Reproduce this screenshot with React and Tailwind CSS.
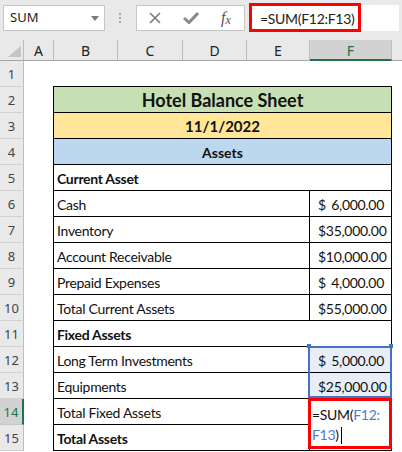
import React from 'react';

function RowHead({ n, active }) {
  return active ? (
    <div className="w-[24px] shrink-0 h-full flex items-center justify-center bg-[#d2d2d2] text-[#217346] border-b border-b-[#c6c6c6] border-r-2 border-r-[#217346] text-[13px] font-['Noto_Sans',sans-serif] pt-[2px]">
      {n}
    </div>
  ) : (
    <div className="w-[24px] shrink-0 h-full flex items-center justify-center bg-[#e9e9e9] text-[#444] border-b border-b-[#d0d0d0] border-r border-r-[#bdbdbd] text-[13px] font-['Noto_Sans',sans-serif] pt-[2px]">
      {n}
    </div>
  );
}

function Row({ n, active, children }) {
  return (
    <div className="flex h-[26px]">
      <RowHead n={n} active={active} />
      <div className="w-[29px] shrink-0 bg-white" />
      {children}
      <div className="flex-1 bg-white" />
    </div>
  );
}

function Full({ bg, children, bold, center, size }) {
  return (
    <div
      className={
        'w-[339px] shrink-0 h-full border-l border-r border-b border-black flex items-center pt-[2px] ' +
        bg +
        ' ' +
        (center ? 'justify-center ' : 'pl-[3px] ') +
        (bold ? 'font-bold ' : '') +
        size
      }
    >
      {children}
    </div>
  );
}

function Pair({ label, value, bold, sel }) {
  const parts = value ? value.split('$') : null;
  return (
    <>
      <div
        className={
          'w-[256px] shrink-0 h-full border-l border-b border-black flex items-center pl-[3px] pt-[2px] text-[14px] tracking-[-0.3px] ' +
          (bold ? 'font-bold' : '')
        }
      >
        {label}
      </div>
      <div
        className={
          'w-[83px] shrink-0 h-full border-l border-r border-b border-black flex items-center justify-between pl-[8px] pr-[7px] pt-[2px] text-[14px] tracking-[-0.3px] ' +
          (sel ? 'bg-[#e8eef8]' : 'bg-white')
        }
      >
        {value ? (
          <>
            <span>$</span>
            <span>{parts[1].trim()}</span>
          </>
        ) : null}
      </div>
    </>
  );
}

export default function App() {
  const data = [
    [6, 'Cash', '$ 6,000.00'],
    [7, 'Inventory', '$35,000.00'],
    [8, 'Account Receivable', '$10,000.00'],
    [9, 'Prepaid Expenses', '$ 4,000.00'],
    [10, 'Total Current Assets', '$55,000.00'],
  ];
  return (
    <div className="w-[402px] h-[452px] overflow-hidden bg-white text-black">
      {/* formula bar */}
      <div className="h-[40px] bg-[#e9e9e9] flex items-start pt-[5px] pl-[3px] font-['Noto_Sans',sans-serif]">
        <div className="w-[102px] h-[26px] bg-white border border-[#c6c6c6] flex items-center justify-between pl-[6px] pr-[5px]">
          <span className="text-[13px] text-[#222]">SUM</span>
          <svg width="8" height="5" viewBox="0 0 8 5">
            <path d="M0 0 L8 0 L4 5 Z" fill="#7a7a7a" />
          </svg>
        </div>
        <div className="w-[31px] h-[26px] flex flex-col justify-center gap-[2px] pl-[14px]">
          <div className="w-[2px] h-[2px] bg-[#a6a6a6]" />
          <div className="w-[2px] h-[2px] bg-[#a6a6a6]" />
          <div className="w-[2px] h-[2px] bg-[#a6a6a6]" />
        </div>
        <div className="w-[109px] h-[26px] bg-white border border-[#c6c6c6] flex items-center gap-[22px] pl-[12px]">
          <svg width="12" height="12" viewBox="0 0 12 12">
            <path d="M1 1 L11 11 M11 1 L1 11" stroke="#7a7a7a" strokeWidth="1.6" fill="none" />
          </svg>
          <svg width="16" height="12" viewBox="0 0 16 12">
            <path d="M1 6 L6 10.5 L15 1" stroke="#8a8a8a" strokeWidth="3" fill="none" />
          </svg>
          <span className="font-['Liberation_Serif',serif] italic text-[#555] leading-none flex items-end">
            <span className="text-[16px]">f</span>
            <span className="text-[12px]">x</span>
          </span>
        </div>
        <div className="ml-[4px] w-[150px] h-[26px] bg-white relative flex items-center pl-[11px]">
          <span className="text-[14px] tracking-[-0.3px] text-[#222] font-['Lato',sans-serif] whitespace-nowrap">=SUM(F12:F13)</span>
          <div className="absolute left-0 top-[-2px] w-[112px] h-[29px] border-[3px] border-[#ff0000]" />
        </div>
      </div>

      {/* column headers */}
      <div className="flex h-[21px] bg-[#e9e9e9] font-['Noto_Sans',sans-serif] text-[14px] text-[#222]">
        <div className="w-[24px] shrink-0 h-full border-r border-r-[#bdbdbd] border-b border-b-[#a6a6a6] relative">
          <svg className="absolute left-[8px] top-[6px]" width="13" height="11" viewBox="0 0 13 11">
            <path d="M13 0 L13 11 L0 11 Z" fill="#c4c4c4" />
          </svg>
        </div>
        <div className="w-[30px] shrink-0 h-full border-r border-r-[#bdbdbd] border-b border-b-[#a6a6a6] flex items-center justify-center">A</div>
        <div className="w-[64px] shrink-0 h-full border-r border-r-[#bdbdbd] border-b border-b-[#a6a6a6] flex items-center justify-center">B</div>
        <div className="w-[65px] shrink-0 h-full border-r border-r-[#bdbdbd] border-b border-b-[#a6a6a6] flex items-center justify-center">C</div>
        <div className="w-[64px] shrink-0 h-full border-r border-r-[#bdbdbd] border-b border-b-[#a6a6a6] flex items-center justify-center">D</div>
        <div className="w-[63px] shrink-0 h-full border-r border-r-[#bdbdbd] border-b border-b-[#a6a6a6] flex items-center justify-center">E</div>
        <div className="w-[82px] shrink-0 h-full bg-[#d2d2d2] border-r border-r-[#bdbdbd] border-b-2 border-b-[#217346] flex items-center justify-center text-[#217346] pt-[1px]">F</div>
        <div className="flex-1 h-full border-b border-b-[#a6a6a6]" />
      </div>

      {/* sheet rows */}
      <div className="relative font-['Lato',sans-serif] text-[#111]">
        <Row n={1}>
          <div className="w-[339px] shrink-0 h-full border-b border-black" />
        </Row>
        <Row n={2}>
          <Full bg="bg-[#c6e0b4]" bold center size="text-[18px]">Hotel Balance Sheet</Full>
        </Row>
        <Row n={3}>
          <Full bg="bg-[#ffe699]" bold center size="text-[15px]">11/1/2022</Full>
        </Row>
        <Row n={4}>
          <Full bg="bg-[#bdd7ee]" bold center size="text-[14px]">Assets</Full>
        </Row>
        <Row n={5}>
          <Full bg="bg-white" bold size="text-[14px] tracking-[-0.3px]">Current Asset</Full>
        </Row>
        {data.map(([n, l, v]) => (
          <Row key={n} n={n}>
            <Pair label={l} value={v} />
          </Row>
        ))}
        <Row n={11}>
          <Full bg="bg-white" bold size="text-[14px] tracking-[-0.3px]">Fixed Assets</Full>
        </Row>
        <Row n={12}>
          <Pair label="Long Term Investments" value="$ 5,000.00" sel />
        </Row>
        <Row n={13}>
          <Pair label="Equipments" value="$25,000.00" sel />
        </Row>
        <Row n={14} active>
          <Pair label="Total Fixed Assets" value="" />
        </Row>
        <Row n={15}>
          <Pair label="Total Assets" value="" bold />
        </Row>

        {/* reference selection */}
        <div className="absolute left-[308px] top-[285px] w-[84px] h-[52px] border-2 border-[#4472c4]" />
        <div className="absolute left-[307px] top-[283px] w-[4px] h-[4px] bg-[#4472c4]" />
        <div className="absolute left-[389px] top-[283px] w-[4px] h-[4px] bg-[#4472c4]" />

        {/* edit cell */}
        <div className="absolute left-[308px] top-[337px] w-[84px] h-[51px] border-[3px] border-[#ff0000] bg-white pl-[1px] pt-[4px] text-[14px] tracking-[-0.3px] leading-[20px]">
          <div className="whitespace-nowrap">
            <span className="text-[#111]">=SUM(</span>
            <span className="text-[#4a7bd0]">F12:</span>
          </div>
          <div className="flex items-center">
            <span className="text-[#4a7bd0]">F13</span>
            <span className="text-[#111]">)</span>
            <span className="inline-block w-[1px] h-[17px] bg-black ml-[2px]" />
          </div>
        </div>
      </div>
    </div>
  );
}
